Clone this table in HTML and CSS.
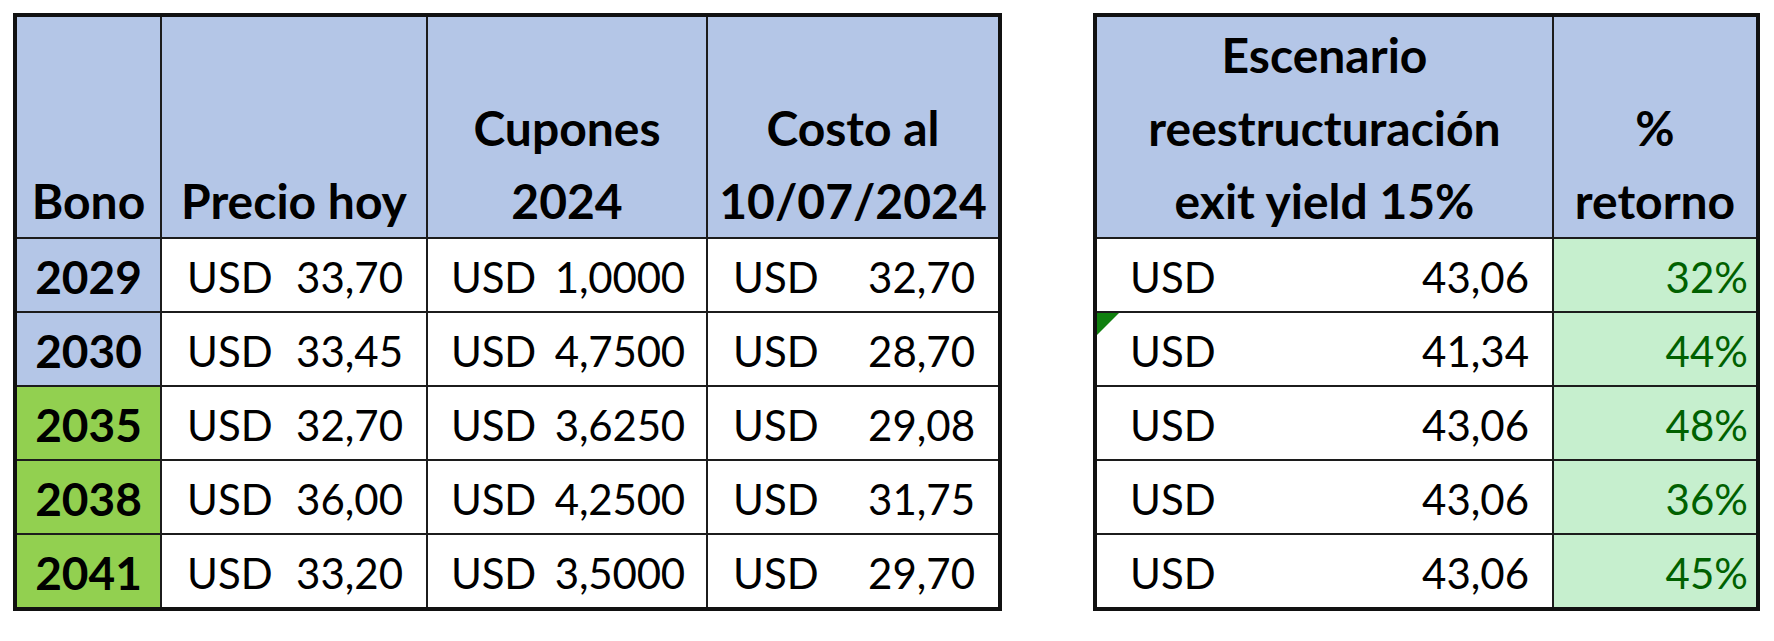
FILE: index.html
```html
<!DOCTYPE html>
<html lang="es">
<head>
<meta charset="utf-8">
<title>Bonos</title>
<link rel="stylesheet" href="styles.css">
</head>
<body>
<div class="page">
  <div class="sheet sheet-left">
    <div class="hd"><span>Bono</span></div>
    <div class="hd"><span>Precio hoy</span></div>
    <div class="hd"><span>Cupones</span><span>2024</span></div>
    <div class="hd"><span>Costo al</span><span>10/07/2024</span></div>

    <div class="bono blue">2029</div>
    <div class="acct"><span>USD</span><span>33,70</span></div>
    <div class="acct acct-tight"><span>USD</span><span>1,0000</span></div>
    <div class="acct"><span>USD</span><span>32,70</span></div>

    <div class="bono blue">2030</div>
    <div class="acct"><span>USD</span><span>33,45</span></div>
    <div class="acct acct-tight"><span>USD</span><span>4,7500</span></div>
    <div class="acct"><span>USD</span><span>28,70</span></div>

    <div class="bono green">2035</div>
    <div class="acct"><span>USD</span><span>32,70</span></div>
    <div class="acct acct-tight"><span>USD</span><span>3,6250</span></div>
    <div class="acct"><span>USD</span><span>29,08</span></div>

    <div class="bono green">2038</div>
    <div class="acct"><span>USD</span><span>36,00</span></div>
    <div class="acct acct-tight"><span>USD</span><span>4,2500</span></div>
    <div class="acct"><span>USD</span><span>31,75</span></div>

    <div class="bono green">2041</div>
    <div class="acct"><span>USD</span><span>33,20</span></div>
    <div class="acct acct-tight"><span>USD</span><span>3,5000</span></div>
    <div class="acct"><span>USD</span><span>29,70</span></div>
  </div>

  <div class="sheet sheet-right">
    <div class="hd"><span>Escenario</span><span>reestructuración</span><span>exit yield 15%</span></div>
    <div class="hd"><span>%</span><span>retorno</span></div>

    <div class="acct acct-wide"><span>USD</span><span>43,06</span></div>
    <div class="pct">32%</div>

    <div class="acct acct-wide flagged"><span>USD</span><span>41,34</span></div>
    <div class="pct">44%</div>

    <div class="acct acct-wide"><span>USD</span><span>43,06</span></div>
    <div class="pct">48%</div>

    <div class="acct acct-wide"><span>USD</span><span>43,06</span></div>
    <div class="pct">36%</div>

    <div class="acct acct-wide"><span>USD</span><span>43,06</span></div>
    <div class="pct">45%</div>
  </div>
</div>
</body>
</html>
```

FILE: styles.css
```css
html, body {
  margin: 0;
  padding: 0;
  background: #ffffff;
}

.page {
  display: flex;
  align-items: flex-start;
  gap: 91px;
  padding: 13px 0 0 13px;
  font-family: Lato, "Open Sans", sans-serif;
  color: #000;
}

.sheet {
  display: grid;
  gap: 2px;
  background: #1c1c1c;
  border: 4px solid #111;
  grid-template-rows: 220px repeat(5, 72px);
}

.sheet-left {
  grid-template-columns: 143px 264px 278px 290px;
}

.sheet-right {
  grid-template-columns: 455px 202px;
}

.sheet > div {
  background: #ffffff;
  overflow: hidden;
}

.hd {
  background: #b4c6e7 !important;
  display: flex;
  flex-direction: column;
  justify-content: flex-end;
  align-items: center;
  font-weight: 700;
  font-size: 48px;
  line-height: 73px;
  white-space: nowrap;
}

.bono {
  font-weight: 700;
  font-size: 46px;
  line-height: 72px;
  padding-top: 2px;
  text-align: center;
}

.blue {
  background: #b4c6e7 !important;
}

.green {
  background: #92d050 !important;
}

.acct {
  display: flex;
  justify-content: space-between;
  gap: 9px;
  font-size: 42px;
  line-height: 72px;
  padding: 2px 23px 0 25px;
  white-space: nowrap;
}

.acct-tight {
  padding-left: 23px;
  padding-right: 21px;
  letter-spacing: -0.2px;
}

.acct-wide {
  padding-left: 33px;
}

.flagged {
  position: relative;
}

.flagged::before {
  content: "";
  position: absolute;
  left: 0;
  top: 0;
  width: 0;
  height: 0;
  border-top: 22px solid #10800f;
  border-right: 22px solid transparent;
}

.pct {
  background: #c6efce !important;
  color: #006100;
  font-size: 42px;
  line-height: 72px;
  padding: 2px 8px 0 0;
  text-align: right;
}
```
